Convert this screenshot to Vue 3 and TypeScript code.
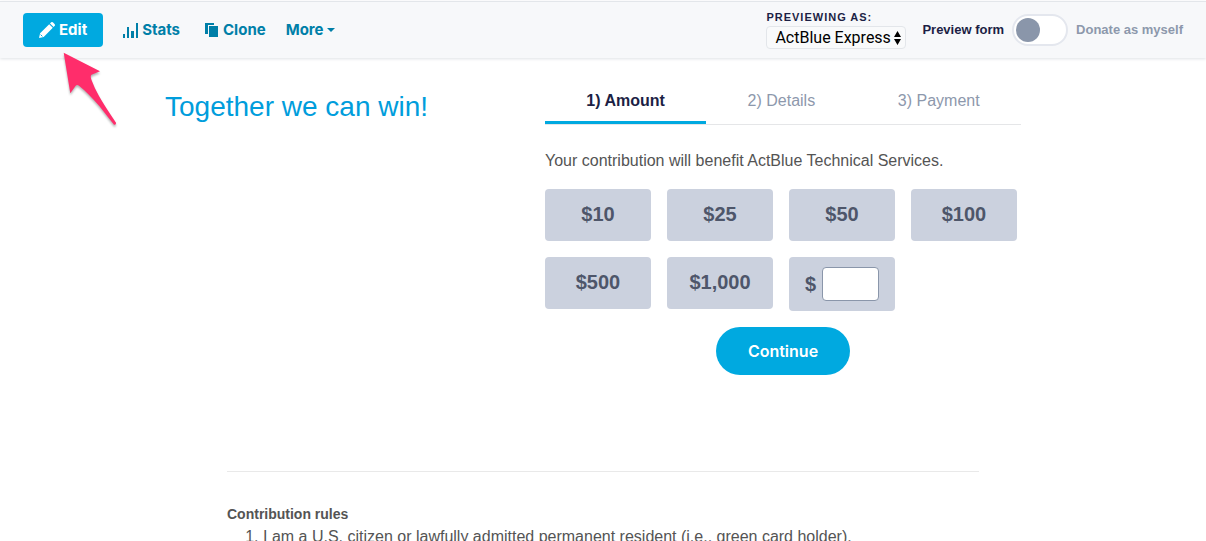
<script setup lang="ts">
import { ref } from 'vue'

const previewModes: string[] = ['ActBlue Express', 'New donor']
const previewMode = ref<string>(previewModes[0])
const donateAsMyself = ref<boolean>(false)

const steps: string[] = ['1) Amount', '2) Details', '3) Payment']
const currentStep = ref<number>(0)

const amounts: string[] = ['$10', '$25', '$50', '$100', '$500', '$1,000']
const customAmount = ref<string>('')

const rules: string[] = [
  'I am a U.S. citizen or lawfully admitted permanent resident (i.e., green card holder).',
]
</script>

<template>
  <div class="page">
    <header class="toolbar">
      <nav class="actions">
        <a class="edit" href="#edit">
          <svg width="16" height="16" viewBox="0 0 16 16" aria-hidden="true">
            <path fill="currentColor" d="M0 16l1.100-4.700L10.200 2.200l3.600 3.600L4.700 14.900zM11 1.400l.9-.9c.7-.7 1.500-.7 2.200 0l1.400 1.400c.7.7.7 1.500 0 2.200l-.9.9z" />
            <path class="edit-detail" d="M1.600 12.600l1.800 1.800" />
          </svg>
          Edit
          <svg class="pointer" width="56" height="76" viewBox="0 0 56 76" aria-hidden="true">
            <path d="M.7 1.700L37 20.300 28.500 23.700Q27 25 28.500 29Q31 36 36 45Q41 54 53 71.700Q53.500 74 51 73.700L36.300 55Q24 41 16.300 35Q14 33 12.500 35L7.300 42.300Z" />
          </svg>
        </a>
        <a class="action" href="#stats">
          <svg width="15" height="15" viewBox="0 0 15 15" aria-hidden="true">
            <path fill="currentColor" d="M0 11h2v4H0zM4 4h2v11H4zM8 8h3v7H8zM13 0h2v15h-2z" />
          </svg>
          Stats
        </a>
        <a class="action clone" href="#clone">
          <svg width="13" height="14" viewBox="0 0 13 14" aria-hidden="true">
            <path fill="currentColor" d="M0 0h9v2H3v9H0zM4 3h9v11H4z" />
          </svg>
          Clone
        </a>
        <button class="action more" type="button">
          More
          <svg width="8" height="4" viewBox="0 0 8 4" aria-hidden="true"><path fill="currentColor" d="M0 0h8L4 4z" /></svg>
        </button>
      </nav>
      <div class="preview">
        <div class="preview-field">
          <label class="preview-label" for="preview-mode">Previewing as:</label>
          <div class="select-wrap">
            <select id="preview-mode" v-model="previewMode">
              <option v-for="mode in previewModes" :key="mode">{{ mode }}</option>
            </select>
            <svg class="select-arrows" width="7" height="14" viewBox="0 0 7 14" aria-hidden="true">
              <path d="M3.500 0L7 6H0zM3.500 14L0 8h7z" />
            </svg>
          </div>
        </div>
        <label class="toggle">
          <span class="toggle-on">Preview form</span>
          <input v-model="donateAsMyself" type="checkbox" role="switch" />
          <span class="toggle-off">Donate as myself</span>
        </label>
      </div>
    </header>

    <main class="content">
      <h1>Together we can win!</h1>
      <form class="contribution" @submit.prevent>
        <nav class="steps">
          <button
            v-for="(step, index) in steps"
            :key="step"
            type="button"
            :class="['step', { current: index === currentStep }]"
            @click="currentStep = index"
          >{{ step }}</button>
        </nav>
        <p class="benefit">Your contribution will benefit ActBlue Technical Services.</p>
        <div class="amounts">
          <button v-for="amount in amounts" :key="amount" class="amount" type="button">{{ amount }}</button>
          <label class="custom">
            $
            <input v-model="customAmount" type="text" inputmode="decimal" aria-label="Other amount in dollars" />
          </label>
        </div>
        <button class="continue" type="submit">Continue</button>
      </form>
    </main>

    <footer class="rules">
      <h2>Contribution rules</h2>
      <ol>
        <li v-for="rule in rules" :key="rule">{{ rule }}</li>
      </ol>
    </footer>
  </div>
</template>

<style>
body {
  margin: 0;
}
</style>

<style scoped>
.page {
  height: 100vh;
  overflow-y: auto;
  scrollbar-width: none;
  background: #fff;
  color: #545454;
  font: 16px/20px "Liberation Sans", Arial, sans-serif;
}

.page * {
  box-sizing: border-box;
}

button,
select,
input {
  margin: 0;
  font-family: inherit;
}

.toolbar {
  display: flex;
  align-items: center;
  justify-content: space-between;
  height: 57px;
  margin-top: 1px;
  padding: 0 23px;
  border-top: 1px solid #e3e6ea;
  background: #f7f8fa;
  box-shadow: 0 1px 3px #dfe2e6;
}

.actions,
.action,
.edit,
.preview,
.toggle {
  display: flex;
  align-items: center;
}

.actions {
  font: 700 15px/20px Inter, sans-serif;
}

.edit {
  position: relative;
  gap: 4px;
  height: 34px;
  padding: 0 16px;
  border-radius: 4px;
  background: #00a9e0;
  color: #fff;
  text-decoration: none;
}

.edit-detail {
  fill: none;
  stroke: #00a9e0;
  stroke-width: 1;
}

.pointer {
  position: absolute;
  top: 38px;
  left: 40px;
  overflow: visible;
  fill: #ff2d6b;
  filter: drop-shadow(0 2px 1px #0000004d);
}

.action {
  gap: 4px;
  margin-left: 20px;
  padding: 0;
  border: 0;
  background: none;
  color: #007fa8;
  font: inherit;
  text-decoration: none;
}

.clone {
  gap: 5px;
  margin-left: 25px;
}

.more {
  gap: 3px;
}

.preview {
  gap: 16px;
}

.preview-label {
  display: block;
  color: #1c1f45;
  font-size: 11px;
  font-weight: 700;
  line-height: 14px;
  letter-spacing: 1px;
  text-transform: uppercase;
}

.preview-field {
  padding-bottom: 1px;
}

.select-wrap {
  position: relative;
  width: 140px;
  margin-top: 2px;
}

select {
  display: block;
  width: 100%;
  height: 23px;
  padding: 0 8px;
  appearance: none;
  border: 1px solid #e3e6ea;
  border-radius: 4px;
  background: #f9fafb;
  color: #000;
  font: 16px/21px Roboto, sans-serif;
}

.select-arrows {
  position: absolute;
  top: 5px;
  right: 5px;
  pointer-events: none;
}

.toggle {
  gap: 8px;
  font-size: 13px;
  font-weight: 700;
}

.toggle-on {
  color: #1c1f45;
}

.toggle-off {
  color: #8d98ac;
}

.toggle input {
  width: 56px;
  height: 32px;
  padding: 2px;
  appearance: none;
  border: 2px solid #e4e7ee;
  border-radius: 16px;
  background: #fff;
}

.toggle input::before {
  display: block;
  width: 24px;
  height: 24px;
  border-radius: 50%;
  background: #8a96aa;
  content: "";
}

.toggle input:checked::before {
  margin-left: auto;
}

.content {
  display: grid;
  grid-template-columns: 380px 1fr;
  max-width: 876px;
  margin: 0 auto;
  padding-right: 20px;
}

h1 {
  margin: 31px 0 0;
  color: #009ddc;
  font-size: 28px;
  font-weight: 400;
  line-height: 36px;
}

.contribution {
  padding-top: 19px;
}

.steps {
  display: flex;
  height: 48px;
  border-bottom: 1px solid #e5e6e8;
}

.step {
  flex: 1 1 auto;
  padding: 3px 0 0;
  border: 0;
  border-bottom: 3px solid transparent;
  background: none;
  color: #8d98ac;
  font-size: 16px;
}

.step.current {
  border-color: #00a9e0;
  color: #1c1f45;
  font-weight: 700;
}

.benefit {
  margin: 26px 0 18px;
}

.amounts {
  display: grid;
  grid-template-columns: repeat(4, 1fr);
  align-items: start;
  gap: 16px;
  padding-right: 4px;
}

.amount,
.custom {
  height: 52px;
  border: 0;
  border-radius: 4px;
  background: #cbd1de;
  color: #4e566a;
  font-size: 20px;
  font-weight: 700;
}

.amount {
  padding: 0 0 2px;
}

.custom {
  display: flex;
  align-items: center;
  justify-content: space-between;
  height: 54px;
  padding: 0 16px;
}

.custom input {
  width: 57px;
  height: 34px;
  padding: 0 8px;
  border: 1px solid #8a96aa;
  border-radius: 4px;
  background: #fff;
  font-size: 16px;
}

.continue {
  display: block;
  height: 48px;
  margin: 16px auto 0;
  padding: 0 32px;
  border: 0;
  border-radius: 24px;
  background: #00a9e0;
  color: #fff;
  font: 600 16px/20px Inter, sans-serif;
}

.rules {
  max-width: 752px;
  margin: 96px auto 0;
  padding-top: 32px;
  border-top: 1px solid #e9e9e9;
}

h2 {
  margin: 0;
  font-size: 14px;
  line-height: 20px;
}

ol {
  margin: 3px 0 0;
  padding-left: 36px;
}
</style>
